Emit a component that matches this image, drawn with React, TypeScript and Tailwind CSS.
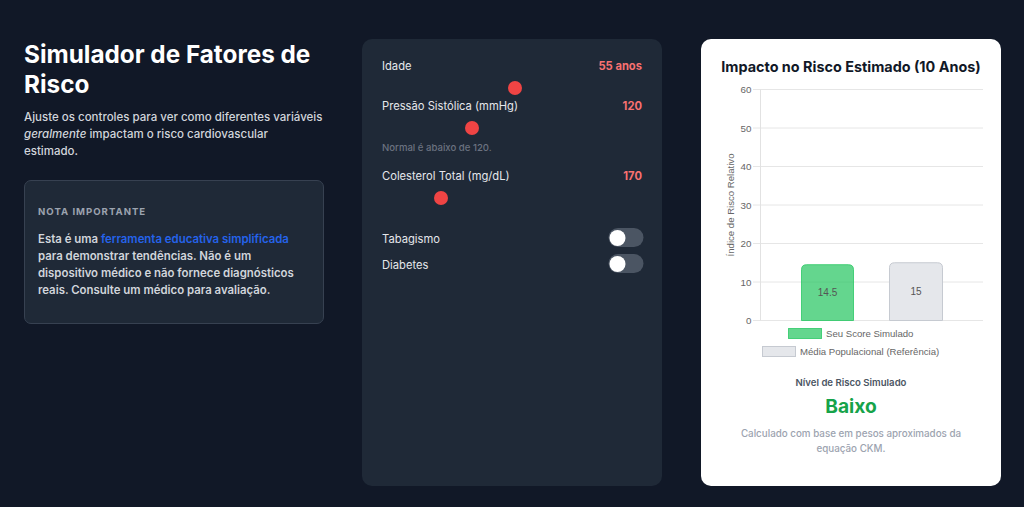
import React from "react";

const sliders = [
  { label: "Idade", value: "55 anos", pct: 0.512 },
  { label: "Pressão Sistólica (mmHg)", value: "120", pct: 0.336, note: "Normal é abaixo de 120." },
  { label: "Colesterol Total (mg/dL)", value: "170", pct: 0.2105 },
];

function Slider({ pct }: { pct: number }) {
  return (
    <div className="relative h-[14px] mt-[6px] w-full">
      <div
        className="absolute top-0 w-[14px] h-[14px] rounded-full bg-[#ef4444]"
        style={{ left: `${pct * 246}px` }}
      />
    </div>
  );
}

function Toggle() {
  return (
    <div className="relative w-[35px] h-[19px] rounded-full bg-[#4b5563] translate-x-[1.5px]">
      <div className="absolute left-[1px] top-[1.5px] w-[16px] h-[16px] rounded-full bg-white" />
    </div>
  );
}

function Chart() {
  const ticks = [60, 50, 40, 30, 20, 10, 0];
  const y0 = 240.5;
  const unit = 3.85;
  const gTop = y0 - 14.5 * unit;
  const pTop = y0 - 15 * unit;
  const font = "'Liberation Sans', Arial, Helvetica, sans-serif";
  return (
    <svg width="300" height="285" viewBox="0 0 300 285" className="block">
      {ticks.map((t, i) => {
        const y = 9.5 + i * 38.5;
        return (
          <g key={t}>
            <line x1="52" x2="282" y1={y} y2={y} stroke="#e6e6e6" strokeWidth="1" />
            <text x="50.5" y={y} textAnchor="end" dominantBaseline="central" fontSize="9.8" fill="#666" fontFamily={font}>
              {t}
            </text>
          </g>
        );
      })}
      <line x1="59.5" x2="59.5" y1="9.5" y2="240.5" stroke="#e2e2e2" strokeWidth="1" />
      <text
        x="0"
        y="0"
        transform="translate(29 125) rotate(-90)"
        textAnchor="middle"
        dominantBaseline="central"
        fontSize="9.6"
        fill="#666"
        fontFamily={font}
      >
        Índice de Risco Relativo
      </text>
      <path
        d={`M100.5,240.5 V${gTop + 5} Q100.5,${gTop} 105.5,${gTop} H147.5 Q152.5,${gTop} 152.5,${gTop + 5} V240.5 Z`}
        fill="rgba(34,197,94,0.7)"
        stroke="rgba(34,197,94,0.75)"
        strokeWidth="1"
      />
      <path
        d={`M188.5,240.5 V${pTop + 5} Q188.5,${pTop} 193.5,${pTop} H236.5 Q241.5,${pTop} 241.5,${pTop + 5} V240.5 Z`}
        fill="#e5e7eb"
        stroke="#c6cad1"
        strokeWidth="1"
      />
      <text x="126.5" y="212.5" textAnchor="middle" dominantBaseline="central" fontSize="10" fill="#555" fontFamily={font}>
        14.5
      </text>
      <text x="215" y="211.5" textAnchor="middle" dominantBaseline="central" fontSize="10" fill="#555" fontFamily={font}>
        15
      </text>
      <rect x="87.5" y="248.5" width="33" height="10" fill="rgba(34,197,94,0.7)" stroke="rgba(34,197,94,0.75)" strokeWidth="1" />
      <text x="125" y="253.5" dominantBaseline="central" fontSize="9.6" fill="#666" fontFamily={font}>
        Seu Score Simulado
      </text>
      <rect x="61.5" y="266.5" width="33" height="10" fill="#e5e7eb" stroke="#c6cad1" strokeWidth="1" />
      <text x="99" y="271.5" dominantBaseline="central" fontSize="9.6" fill="#666" fontFamily={font}>
        Média Populacional (Referência)
      </text>
    </svg>
  );
}

export default function App() {
  return (
    <div
      className="w-full min-h-[507px] bg-[#111827] flex items-start pl-[24px] pt-[39px] pb-[21px]"
      style={{ fontFamily: "Inter, 'Noto Sans', sans-serif" }}
    >
      {/* Left column */}
      <div className="w-[300px] shrink-0 flex flex-col">
        <h1 className="text-white font-bold text-[24.3px] leading-[30px]">
          Simulador de Fatores de Risco
        </h1>
        <p className="mt-[10px] text-[#d1d5db] font-medium text-[11.5px] leading-[17px]">
          Ajuste os controles para ver como diferentes variáveis <em>geralmente</em> impactam o risco
          cardiovascular
          <br />
          estimado.
        </p>
        <div className="mt-[20px] rounded-[7px] border border-[#374151] bg-[#1f2937] pl-[13px] pr-[20px] pt-[24px] pb-[24px]">
          <div className="text-[9.6px] leading-[14px] font-bold tracking-[1px] uppercase text-[#9ca3af]">
            Nota Importante
          </div>
          <p className="mt-[12px] text-[11.4px] leading-[17px] font-semibold text-[#d1d5db]">
            Esta é uma <span className="text-[#2563eb]">ferramenta educativa simplificada</span> para
            demonstrar tendências. Não é um dispositivo médico e não fornece diagnósticos reais.
            Consulte um médico para avaliação.
          </p>
        </div>
      </div>

      {/* Middle panel */}
      <div className="ml-[38px] w-[300px] h-[447px] shrink-0 rounded-[10px] bg-[#1f2937] px-[20px] pt-[19px] flex flex-col">
        {sliders.map((s, i) => (
          <div key={s.label} className={i === 0 ? "" : i === 1 ? "mt-[2.5px]" : "mt-[12.5px]"}>
            <div className="flex justify-between items-center h-[17px]">
              <span className="text-[11.2px] text-[#e5e7eb]">{s.label}</span>
              <span className="text-[11.2px] font-bold text-[#f87171]">{s.value}</span>
            </div>
            <Slider pct={s.pct} />
            {s.note && (
              <div className="mt-[6.5px] text-[9.6px] leading-[14px] font-medium text-[#6b7280]">{s.note}</div>
            )}
          </div>
        ))}
        <div className="mt-[23.5px] flex flex-col gap-[7px]">
          <div className="flex justify-between items-center h-[19px]">
            <span className="text-[11.2px] text-[#e5e7eb] translate-y-[2px]">Tabagismo</span>
            <Toggle />
          </div>
          <div className="flex justify-between items-center h-[19px]">
            <span className="text-[11.2px] text-[#e5e7eb] translate-y-[2px]">Diabetes</span>
            <Toggle />
          </div>
        </div>
      </div>

      {/* Right panel */}
      <div className="ml-[39px] w-[300px] h-[447px] shrink-0 rounded-[10px] bg-white pt-[18px] flex flex-col items-center">
        <h2 className="text-[14.4px] leading-[20px] font-bold text-[#111827]">
          Impacto no Risco Estimado (10 Anos)
        </h2>
        <div className="mt-[3px] self-stretch">
          <Chart />
        </div>
        <div className="mt-[11px] text-[9.6px] leading-[14px] font-semibold text-[#4b5563]">
          Nível de Risco Simulado
        </div>
        <div className="mt-[4px] text-[19.2px] leading-[24px] font-bold text-[#16a34a]">Baixo</div>
        <p className="mt-[7.5px] px-[30px] text-center text-[9.8px] leading-[15px] font-medium text-[#9ca3af]">
          Calculado com base em pesos aproximados da equação CKM.
        </p>
      </div>
    </div>
  );
}
